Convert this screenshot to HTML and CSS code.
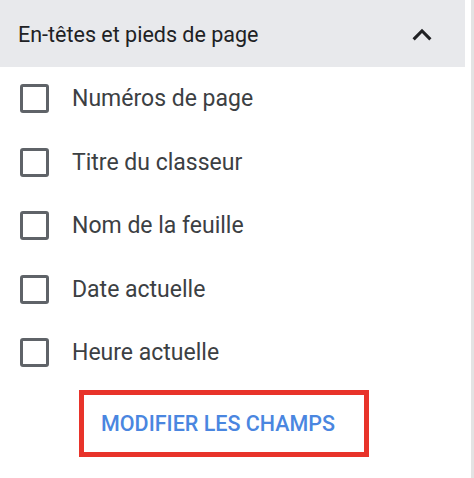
FILE: index.html
```html
<!DOCTYPE html>
<html lang="fr">
<head>
  <meta charset="UTF-8">
  <title>En-têtes et pieds de page</title>
  <link rel="stylesheet" href="styles.css">
</head>
<body>
  <div class="panel">
    <div class="section-header">
      <span class="section-title">En-têtes et pieds de page</span>
      <svg class="chevron" width="24" height="24" viewBox="0 0 24 24">
        <path d="M7.4 15.4 12 10.8l4.6 4.6L18 14l-6-6-6 6z" fill="#202124"/>
      </svg>
    </div>
    <ul class="options">
      <li class="option"><span class="box"></span><span class="label">Numéros de page</span></li>
      <li class="option"><span class="box"></span><span class="label">Titre du classeur</span></li>
      <li class="option"><span class="box"></span><span class="label">Nom de la feuille</span></li>
      <li class="option"><span class="box"></span><span class="label">Date actuelle</span></li>
      <li class="option"><span class="box"></span><span class="label">Heure actuelle</span></li>
    </ul>
    <div class="actions">
      <button class="edit-button">MODIFIER LES CHAMPS</button>
    </div>
  </div>
</body>
</html>
```

FILE: styles.css
```css
body {
  margin: 0;
  font-family: Roboto, 'Liberation Sans', sans-serif;
  background: #fff;
  color: #3c4043;
}
.panel {
  width: 465px;
  height: 478px;
  border-right: 3px solid #e3e3e3;
  padding-right: 6px;
  box-sizing: content-box;
}
.section-header {
  height: 67px;
  background: #e8e9ec;
  display: flex;
  align-items: center;
  justify-content: space-between;
  padding: 2px 24px 0 18px;
  box-sizing: border-box;
}
.section-title {
  font-size: 21.5px;
  color: #202124;
}
.chevron {
  width: 38px;
  height: 38px;
}
.options {
  list-style: none;
  margin: 0;
  padding: 0;
}
.option {
  height: 63.5px;
  display: flex;
  align-items: center;
  padding-left: 20px;
}
.box {
  width: 23px;
  height: 23px;
  border: 3px solid #5f6368;
  border-radius: 3px;
  margin-right: 23px;
}
.label {
  font-size: 23px;
  color: #3c4043;
}
.actions {
  padding: 5px 0 0 79px;
}
.edit-button {
  width: 290px;
  height: 67px;
  border: 5px solid #e8332a;
  background: #fff;
  color: #4a86e0;
  font-family: Roboto, 'Liberation Sans', sans-serif;
  font-weight: 500;
  font-size: 21.5px;
  text-align: left;
  padding: 0 0 0 17px;
}
```
